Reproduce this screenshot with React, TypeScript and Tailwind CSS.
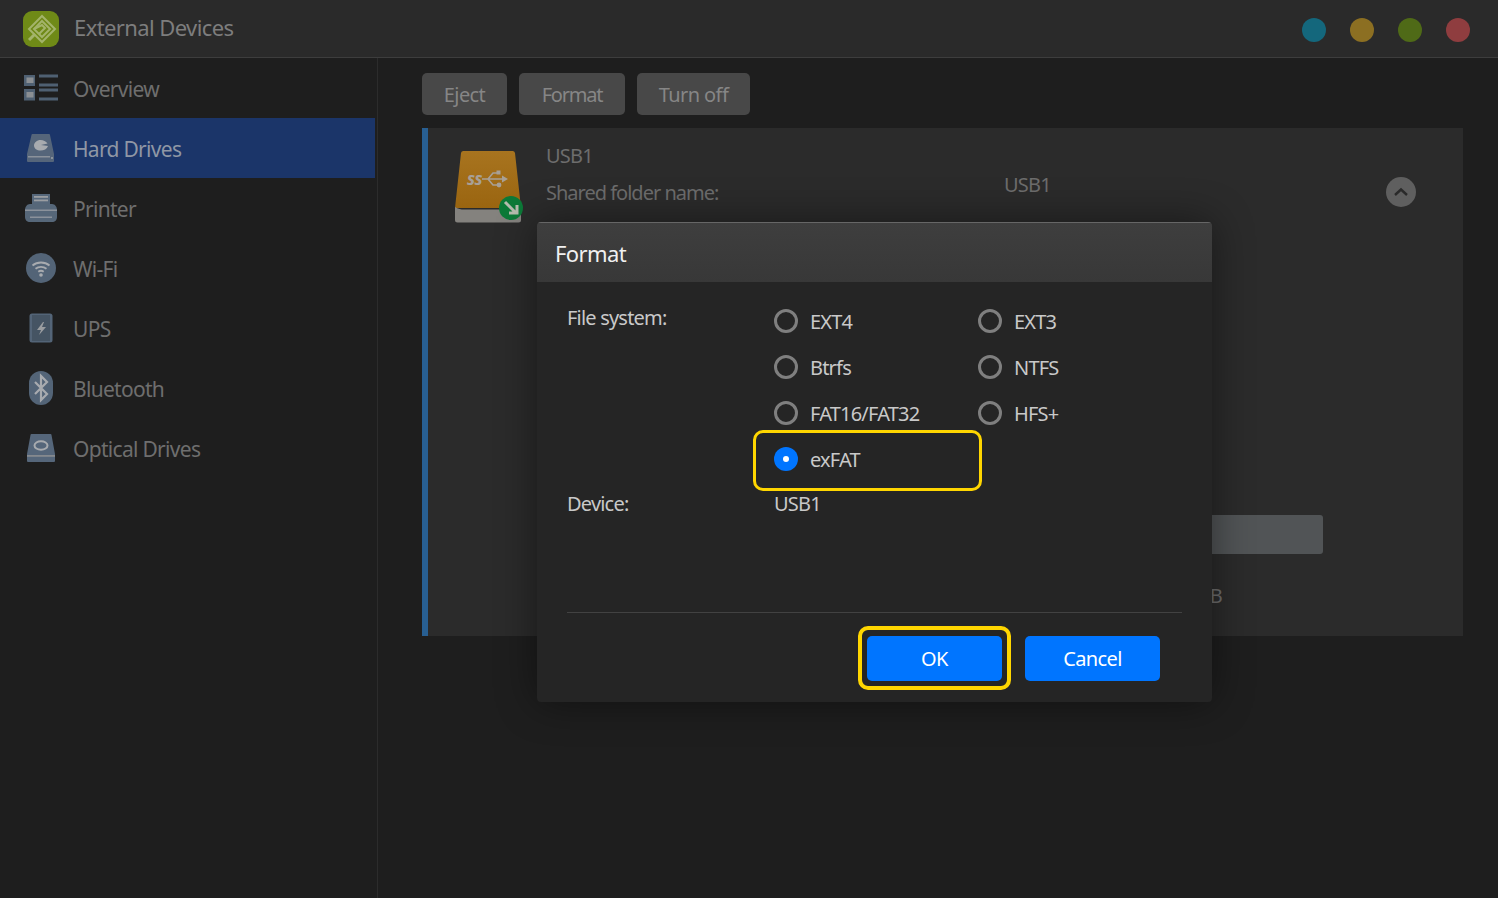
import React from 'react';

const iconFill = '#4f6072';
const iconLight = '#8b8f93';

const OverviewIcon = () => (
  <svg width="36" height="28" viewBox="0 0 36 28">
    <rect x="1" y="1" width="11" height="11" fill={iconFill} />
    <rect x="3.500" y="3.500" width="7" height="5.500" fill={iconLight} />
    <rect x="1" y="15" width="11" height="11.500" fill={iconFill} />
    <rect x="3.500" y="18" width="7" height="5.500" fill={iconLight} />
    <rect x="16" y="0.500" width="19" height="3" fill={iconFill} />
    <rect x="16" y="9.500" width="19" height="3" fill={iconFill} />
    <rect x="16" y="14.500" width="19" height="3" fill={iconFill} />
    <rect x="16" y="23.500" width="19" height="3" fill={iconFill} />
  </svg>
);

const HardDriveIcon = () => (
  <svg width="28" height="28" viewBox="0 0 28 28">
    <path d="M5.500 0h16.500a1 1 0 0 1 1 1l4 19v7a1 1 0 0 1-1 1H1a1 1 0 0 1-1-1v-7l4.500-19a1 1 0 0 1 1-1z" fill="#55657a" />
    <rect x="1" y="22" width="22" height="1.500" fill="#8b929b" />
    <rect x="24" y="23" width="2" height="2" fill="#8b929b" />
    <path d="M21 12c-1 3-4 4.500-7.500 4.500S7 14.500 7 11.500 10 6 13.500 6c3 0 5.500 1.500 7 3.500L14 11z" fill="#a8abaf" />
  </svg>
);

const PrinterIcon = () => (
  <svg width="32" height="28" viewBox="0 0 32 28">
    <path d="M7 0h18v10H7z" fill="#56677a" />
    <rect x="9" y="2" width="14" height="1.800" fill="#9a9da1" />
    <rect x="9" y="5.500" width="14" height="1.800" fill="#9a9da1" />
    <path d="M5 10h22c3 0 5 3 5 6v7c0 3-2 5-5 5H5c-3 0-5-2-5-5v-7c0-3 2-6 5-6z" fill="#566779" />
    <rect x="0" y="15.500" width="32" height="1.500" fill="#8b929b" />
    <rect x="5" y="22.500" width="22" height="1.500" fill="#8b929b" />
  </svg>
);

const WifiIcon = () => (
  <svg width="30" height="30" viewBox="0 0 30 30">
    <circle cx="15" cy="15" r="15" fill="#536477" />
    <path d="M6.500 12.500c4.800-4 12.200-4 17 0M9.500 15.800c3.200-2.600 7.800-2.600 11 0M12.300 18.800c1.600-1.200 3.800-1.200 5.400 0" stroke="#a8abaf" strokeWidth="1.800" fill="none" />
    <circle cx="15" cy="22" r="1.800" fill="#a8abaf" />
  </svg>
);

const UpsIcon = () => (
  <svg width="24" height="30" viewBox="0 0 24 30">
    <rect x="0.500" y="0.500" width="23" height="29" rx="2.500" fill="#536477" />
    <rect x="3" y="2" width="18" height="26" fill="#455463" />
    <path d="M14 9L8 17h4l-2 5 7-8h-4l2-5z" fill="#9a9da0" />
  </svg>
);

const BluetoothIcon = () => (
  <svg width="24" height="34" viewBox="0 0 24 34">
    <rect x="0" y="0" width="24" height="34" rx="12" fill="#536477" />
    <path d="M6 11l12 12-6 6V5l6 6L6 23" stroke="#a8abaf" strokeWidth="2.200" fill="none" />
  </svg>
);

const OpticalIcon = () => (
  <svg width="28" height="28" viewBox="0 0 28 28">
    <path d="M4.500 0h19a1 1 0 0 1 1 1L28 20v7a1 1 0 0 1-1 1H1a1 1 0 0 1-1-1v-7L3.500 1a1 1 0 0 1 1-1z" fill="#55667a" />
    <rect x="0" y="21" width="28" height="1.800" fill="#85898e" />
    <ellipse cx="14" cy="11.500" rx="6.500" ry="4.200" fill="none" stroke="#a8abaf" strokeWidth="2" />
  </svg>
);

const LogoIcon = () => (
  <svg width="36" height="36" viewBox="0 0 36 36">
    <rect width="36" height="36" rx="9" fill="#6f8a17" />
    <g fill="none" stroke="#a3b46b" strokeWidth="2">
      <path d="M19 5l13 13-13 13L6 18z" />
      <path d="M19 10l8 8-8 8-8-8z" />
      <path d="M11 18l8-4 3 3-6 6" />
      <path d="M6 29l6-6" strokeWidth="3" />
    </g>
  </svg>
);

const UsbDriveIcon = () => (
  <svg width="72" height="76" viewBox="0 0 72 76">
    <defs>
      <linearGradient id="driveBody" x1="0" y1="0" x2="0" y2="1">
        <stop offset="0" stopColor="#a8741f" />
        <stop offset="1" stopColor="#9a6510" />
      </linearGradient>
    </defs>
    <path d="M6 4a2.500 2.500 0 0 1 2.500-2h49a2.500 2.500 0 0 1 2.500 2l6 55H0z" fill="url(#driveBody)" />
    <path d="M0 58c3 2 6 2.500 9 2.500h48c3 0 6-.5 9-2.500v13a2.500 2.500 0 0 1-2.500 2.500h-61a2.500 2.500 0 0 1-2.500-2.500z" fill="#84827e" />
    <path d="M27 30h22M33 30l5-6h4M33 30l5 6h4" stroke="#a8a096" strokeWidth="1.600" fill="none" />
    <path d="M53 30l-6-3.500v7z" fill="#a8a096" />
    <rect x="41.500" y="21.500" width="4" height="4" fill="#a8a096" />
    <circle cx="44" cy="36" r="2.400" fill="#a8a096" />
    <text x="12" y="36" fontSize="17" fontStyle="italic" fontWeight="700" fontFamily="'Noto Sans', sans-serif" fill="#a8a096">ss</text>
    <circle cx="56" cy="59" r="12" fill="#0c7a38" />
    <path d="M50 53l11 11M62 56v8h-8" stroke="#b5bcae" strokeWidth="3" fill="none" />
  </svg>
);

const ChevronUp = () => (
  <svg width="16" height="10" viewBox="0 0 16 10">
    <path d="M2 8l6-5.500L14 8" stroke="#2a2a2a" strokeWidth="2.400" fill="none" />
  </svg>
);

const navItems = [
  { label: 'Overview', icon: <OverviewIcon /> },
  { label: 'Hard Drives', icon: <HardDriveIcon />, active: true },
  { label: 'Printer', icon: <PrinterIcon /> },
  { label: 'Wi-Fi', icon: <WifiIcon /> },
  { label: 'UPS', icon: <UpsIcon /> },
  { label: 'Bluetooth', icon: <BluetoothIcon /> },
  { label: 'Optical Drives', icon: <OpticalIcon /> },
];

const Radio = ({ label, checked }: { label: string; checked?: boolean }) => (
  <div className="flex h-[46px] items-center">
    {checked ? (
      <span className="flex h-6 w-6 items-center justify-center rounded-full bg-[#0075ff]">
        <span className="h-[6px] w-[6px] rounded-full bg-white" />
      </span>
    ) : (
      <span className="h-6 w-6 rounded-full border-[3px] border-[#7f7f7f]" />
    )}
    <span className="ml-3 pt-[2px] text-[20px] tracking-[-0.8px] text-[#c9c9c9]">{label}</span>
  </div>
);

const App = () => {
  return (
    <div className="relative flex h-screen w-full flex-col overflow-hidden bg-[#1e1e1e] font-['Noto_Sans',sans-serif] tracking-[-0.6px]">
      <header className="flex h-[58px] items-center justify-between border-b border-[#3d3d3d] bg-[#2a2a2a] pl-[23px] pr-[28px]">
        <div className="flex items-center gap-[15px]">
          <LogoIcon />
          <span className="pb-[2px] text-[22px] text-[#7d7d7d]">External Devices</span>
        </div>
        <div className="flex items-center gap-6 pt-[3px]">
          <span className="h-6 w-6 rounded-full bg-[#14677c]" />
          <span className="h-6 w-6 rounded-full bg-[#8c6f22]" />
          <span className="h-6 w-6 rounded-full bg-[#4f6a17]" />
          <span className="h-6 w-6 rounded-full bg-[#8f3d3f]" />
        </div>
      </header>

      <div className="flex flex-1">
        <aside className="w-[378px] border-r border-[#2c2c2c]">
          {navItems.map((item) => (
            <div
              key={item.label}
              className={`flex h-[60px] w-[375px] items-center ${item.active ? 'bg-[#1b3569] text-[#8f97a5]' : 'text-[#6e6e6e]'}`}
            >
              <span className="flex w-[74px] justify-center pl-[8px] pr-[1px]">{item.icon}</span>
              <span className="-ml-px pt-[4px] text-[21px] tracking-[-0.7px]">{item.label}</span>
            </div>
          ))}
        </aside>

        <main className="flex-1 pl-[44px] pr-[35px] pt-[15px]">
          <div className="flex gap-3">
            <button className="h-[42px] w-[85px] rounded-[5px] bg-[#484848] pt-[2px] text-[20px] text-[#868686]">Eject</button>
            <button className="h-[42px] w-[106px] rounded-[5px] bg-[#484848] pt-[2px] text-[20px] tracking-[-1.2px] text-[#868686]">Format</button>
            <button className="h-[42px] w-[113px] rounded-[5px] bg-[#484848] pt-[2px] text-[20px] text-[#868686]">Turn off</button>
          </div>

          <section className="mt-[13px] h-[508px] border-l-[6px] border-[#285f92] bg-[#2b2b2b] pt-[14px]">
            <div className="flex">
              <div className="ml-[27px] mt-[7px] w-[91px] shrink-0">
                <UsbDriveIcon />
              </div>
              <div className="flex-1 text-[20px] tracking-[-0.8px] text-[#6d6d6d]">
                <div className="leading-[28px]">USB1</div>
                <div className="flex items-start">
                  <span className="mt-[9px] w-[458px] leading-[28px] tracking-[-1px]">Shared folder name:</span>
                  <span className="mt-[1px] leading-[28px]">USB1</span>
                </div>
                <div className="ml-[458px] mt-[308px] h-[39px] w-[319px] rounded-[3px] bg-[#515456]" />
                <div className="ml-[458px] mt-[28px] w-[218px] text-right leading-[28px]">GB</div>
              </div>
              <button className="mr-[47px] mt-[35px] flex h-[30px] w-[30px] items-center justify-center rounded-full bg-[#5f5f5f]">
                <ChevronUp />
              </button>
            </div>
          </section>
        </main>
      </div>

      {/* format dialog */}
      <div className="absolute left-[537px] top-[222px] h-[480px] w-[675px] overflow-hidden rounded-[4px] bg-[#252525] shadow-[0_0_40px_rgba(0,0,0,0.45)]">
        <div className="flex h-[60px] items-center border-t border-[#666666] bg-gradient-to-b from-[#3e3e3e] to-[#383838] pl-[18px] pt-[2px] text-[22px] text-[#f0f0f0]">
          Format
        </div>
        <div className="relative px-[30px] pt-[17px]">
          <div className="flex">
            <div className="w-[207px] pt-[5px] text-[20px] leading-[28px] tracking-[-0.8px] text-[#c9c9c9]">File system:</div>
            <div className="-mt-px grid w-[408px] grid-cols-[204px_204px]">
              <Radio label="EXT4" />
              <Radio label="EXT3" />
              <Radio label="Btrfs" />
              <Radio label="NTFS" />
              <Radio label="FAT16/FAT32" />
              <Radio label="HFS+" />
              <Radio label="exFAT" checked />
            </div>
          </div>
          <div className="absolute left-[216px] top-[148px] h-[61px] w-[229px] rounded-[10px] border-[3px] border-[#ffd600]" />
          <div className="mt-[8px] flex text-[20px] leading-[28px] tracking-[-0.8px] text-[#c9c9c9]">
            <div className="w-[207px]">Device:</div>
            <div>USB1</div>
          </div>
          <div className="mt-[94px] flex h-[90px] items-start justify-end gap-[23px] border-t border-[#424242] pr-[22px] pt-[23px]">
            <div className="relative">
              <button className="block h-[45px] w-[135px] rounded-[5px] bg-[#0075ff] text-[20px] text-white">OK</button>
              <div className="absolute -inset-x-[9px] -bottom-[9px] -top-[10px] rounded-[10px] border-[4px] border-[#ffd600]" />
            </div>
            <button className="h-[45px] w-[135px] rounded-[5px] bg-[#0075ff] text-[20px] text-white">Cancel</button>
          </div>
        </div>
      </div>
    </div>
  );
};

export default App;
